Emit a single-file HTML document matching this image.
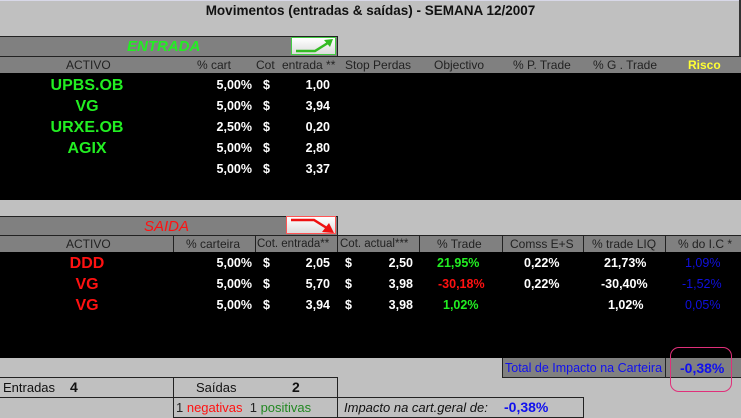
<!DOCTYPE html>
<html><head><meta charset="utf-8"><style>
*{margin:0;padding:0;box-sizing:border-box}
body{width:741px;height:418px;background:#c0c0c0;position:relative;overflow:hidden;font-family:"Liberation Sans",Arial,sans-serif;}
.a{position:absolute;white-space:nowrap}
.w{color:#fff;font-weight:bold;font-size:12.5px}
.g{color:#22ee22;font-weight:bold;font-size:16px}
.r{color:#ff1111;font-weight:bold;font-size:16px}
.bx{position:absolute;border:1px solid #222}
.hd span{position:absolute;top:1px}
</style></head><body>
<div class="a" style="left:0;top:0;width:741px;height:1px;background:#d8d8e8"></div>
<div class="a" style="left:739px;top:0;width:2px;height:73px;background:#333"></div>
<div class="a" style="left:0;top:3px;width:741px;text-align:center;font-weight:bold;font-size:13.5px;color:#111">Movimentos (entradas &amp; saídas) - SEMANA 12/2007</div>

<!-- ENTRADA -->
<div class="a" style="left:0;top:36px;width:338px;height:20px;background:#808080;border-top:1px solid #222;border-right:1px solid #222"></div>
<div class="a" style="left:127px;top:38px;color:#22ee22;font-style:italic;font-weight:bold;font-size:15px">ENTRADA</div>
<div class="a" style="left:291px;top:37px;width:45px;height:18px;background:linear-gradient(#fff,#ddd);border:1px solid #4c4"></div>
<svg class="a" style="left:291px;top:37px" width="45" height="18"><path d="M5 14 H24 L40 4" stroke="#33bb22" stroke-width="2.5" fill="none"/><path d="M33 3 L42 2 L39 10 Z" fill="#33bb22"/></svg>
<div class="a" style="left:0;top:56px;width:741px;height:1px;background:#222"></div>
<div class="a hd" style="left:0;top:57px;width:741px;height:16px;background:#808080;font-size:12px;color:#222">
<span style="left:66px">ACTIVO</span>
<span style="left:197px">% cart</span>
<span style="left:256px">Cot</span>
<span style="left:282px">entrada **</span>
<span style="left:345px;color:#222">Stop Perdas</span>
<span style="left:434px">Objectivo</span>
<span style="left:513px">% P. Trade</span>
<span style="left:593px">% G . Trade</span>
<span style="left:688px;color:#ffff33;font-weight:bold">Risco</span>
</div>
<div class="a" style="left:0;top:73px;width:741px;height:127px;background:#000"></div>
<div class="a g" style="left:0;width:174px;text-align:center;top:77px">UPBS.OB</div>
<div class="a g" style="left:0;width:174px;text-align:center;top:98px">VG</div>
<div class="a g" style="left:0;width:174px;text-align:center;top:119px">URXE.OB</div>
<div class="a g" style="left:0;width:174px;text-align:center;top:140px">AGIX</div>
<div class="a w" style="right:489px;top:78px">5,00%</div><div class="a w" style="left:263px;top:78px">$</div><div class="a w" style="right:411px;top:78px">1,00</div>
<div class="a w" style="right:489px;top:99px">5,00%</div><div class="a w" style="left:263px;top:99px">$</div><div class="a w" style="right:411px;top:99px">3,94</div>
<div class="a w" style="right:489px;top:120px">2,50%</div><div class="a w" style="left:263px;top:120px">$</div><div class="a w" style="right:411px;top:120px">0,20</div>
<div class="a w" style="right:489px;top:141px">5,00%</div><div class="a w" style="left:263px;top:141px">$</div><div class="a w" style="right:411px;top:141px">2,80</div>
<div class="a w" style="right:489px;top:162px">5,00%</div><div class="a w" style="left:263px;top:162px">$</div><div class="a w" style="right:411px;top:162px">3,37</div>

<!-- SAIDA -->
<div class="a" style="left:0;top:216px;width:338px;height:20px;background:#808080;border-top:1px solid #222;border-right:1px solid #222"></div>
<div class="a" style="left:144px;top:218px;color:#ff1111;font-style:italic;font-size:15px">SAIDA</div>
<div class="a" style="left:286px;top:216px;width:50px;height:18px;background:linear-gradient(#fff,#ddd);border:1px solid #f55"></div>
<svg class="a" style="left:286px;top:216px" width="50" height="18"><path d="M5 4 H28 L44 14" stroke="#ee1111" stroke-width="2.5" fill="none"/><path d="M36 16 L48 17 L43 7 Z" fill="#ee1111"/></svg>
<div class="a" style="left:0;top:235px;width:741px;height:1px;background:#222"></div>
<div class="a hd" style="left:0;top:236px;width:741px;height:16px;background:#808080;font-size:12px;color:#222">
<span style="left:66px">ACTIVO</span>
<span style="left:186px">% carteira</span>
<span style="left:257px;font-size:11.5px;top:2px">Cot. entrada**</span>
<span style="left:340px;font-size:11.5px;top:2px">Cot. actual***</span>
<span style="left:437px">% Trade</span>
<span style="left:510px">Comss E+S</span>
<span style="left:592px">% trade LIQ</span>
<span style="left:678px">% do I.C *</span>
<span style="left:173px;top:0;width:1px;height:16px;background:#222"></span>
<span style="left:255px;top:0;width:1px;height:16px;background:#222"></span>
<span style="left:337px;top:0;width:1px;height:16px;background:#222"></span>
<span style="left:419px;top:0;width:1px;height:16px;background:#222"></span>
<span style="left:502px;top:0;width:1px;height:16px;background:#222"></span>
<span style="left:583px;top:0;width:1px;height:16px;background:#222"></span>
<span style="left:665px;top:0;width:1px;height:16px;background:#222"></span>
</div>
<div class="a" style="left:0;top:252px;width:741px;height:106px;background:#000"></div>
<div class="a r" style="left:0;width:174px;text-align:center;top:255px">DDD</div>
<div class="a r" style="left:0;width:174px;text-align:center;top:276px">VG</div>
<div class="a r" style="left:0;width:174px;text-align:center;top:297px">VG</div>

<div class="a w" style="right:489px;top:256px">5,00%</div><div class="a w" style="left:263px;top:256px">$</div><div class="a w" style="right:411px;top:256px">2,05</div><div class="a w" style="left:345px;top:256px">$</div><div class="a w" style="right:328px;top:256px">2,50</div>
<div class="a w" style="left:437px;top:256px;color:#22ee22">21,95%</div><div class="a w" style="left:524px;top:256px">0,22%</div><div class="a w" style="left:604px;top:256px">21,73%</div><div class="a" style="left:685px;top:256px;font-size:12.5px;color:#1010dd">1,09%</div>

<div class="a w" style="right:489px;top:277px">5,00%</div><div class="a w" style="left:263px;top:277px">$</div><div class="a w" style="right:411px;top:277px">5,70</div><div class="a w" style="left:345px;top:277px">$</div><div class="a w" style="right:328px;top:277px">3,98</div>
<div class="a w" style="left:438px;top:277px;color:#ff1111">-30,18%</div><div class="a w" style="left:524px;top:277px">0,22%</div><div class="a w" style="left:601px;top:277px">-30,40%</div><div class="a" style="left:682px;top:277px;font-size:12.5px;color:#1010dd">-1,52%</div>

<div class="a w" style="right:489px;top:298px">5,00%</div><div class="a w" style="left:263px;top:298px">$</div><div class="a w" style="right:411px;top:298px">3,94</div><div class="a w" style="left:345px;top:298px">$</div><div class="a w" style="right:328px;top:298px">3,98</div>
<div class="a w" style="left:443px;top:298px;color:#22ee22">1,02%</div><div class="a w" style="left:608px;top:298px">1,02%</div><div class="a" style="left:685px;top:298px;font-size:12.5px;color:#1010dd">0,05%</div>

<!-- total -->
<div class="a" style="left:502px;top:358px;width:239px;height:20px;background:#808080;border-left:1px solid #222;border-bottom:1px solid #222"></div>
<div class="a" style="left:665px;top:358px;width:1px;height:20px;background:#222"></div>
<div class="a" style="left:505px;top:361px;font-size:12.5px;color:#1010ee">Total de Impacto na Carteira</div>
<div class="a" style="left:680px;top:360px;font-size:14px;font-weight:bold;color:#1010ee">-0,38%</div>
<div class="a" style="left:670px;top:347px;width:62px;height:45px;border:1px solid #e0307a;border-radius:9px"></div>

<!-- bottom -->
<div class="bx" style="left:0;top:377px;width:174px;height:21px;border-left:none"></div>
<div class="bx" style="left:173px;top:377px;width:165px;height:21px"></div>
<div class="bx" style="left:173px;top:397px;width:165px;height:21px"></div>
<div class="bx" style="left:337px;top:397px;width:247px;height:21px"></div>
<div class="a" style="left:3px;top:380px;font-size:13px;color:#111">Entradas</div>
<div class="a" style="left:70px;top:379px;font-size:14px;font-weight:bold;color:#111">4</div>
<div class="a" style="left:196px;top:380px;font-size:13px;color:#111">Saídas</div>
<div class="a" style="left:292px;top:379px;font-size:14px;font-weight:bold;color:#111">2</div>
<div class="a" style="left:176px;top:400px;font-size:13px;color:#222">1 <span style="color:#ff1111">negativas</span> &nbsp;1 <span style="color:#228822">positivas</span></div>
<div class="a" style="left:344px;top:400px;font-size:13px;font-style:italic;color:#111">Impacto na cart.geral de:</div>
<div class="a" style="left:504px;top:399px;font-size:14px;font-weight:bold;color:#1010ee">-0,38%</div>
</body></html>
